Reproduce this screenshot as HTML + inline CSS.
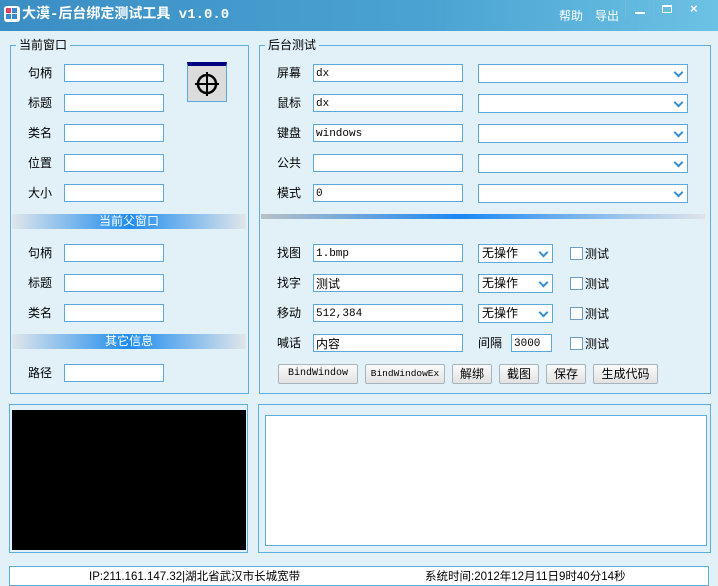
<!DOCTYPE html>
<html><head><meta charset="utf-8"><style>
*{margin:0;padding:0;box-sizing:border-box}
body{width:718px;height:582px;background:#e2f1f8;position:relative;overflow:hidden;font-family:"Liberation Sans","Noto Sans CJK SC",sans-serif;font-size:12px;color:#000}
.a{position:absolute}
.title{left:0;top:0;width:718px;height:31px;background:linear-gradient(90deg,#3b8ec4,#4aa3d2 60%,#6cc2e4);}
.box{position:absolute;border:1px solid #5aaee0}
.leg{position:absolute;background:#e2f1f8;padding:0 3px;font-size:12px;line-height:14px}
.in{position:absolute;height:18px;background:#fff;border:1px solid #5aa8dc;font-family:"Liberation Mono","Noto Sans CJK SC",monospace;font-size:11px;display:flex;align-items:center;padding-left:2px;padding-top:1px}
.lb{position:absolute;font-size:12px;line-height:14px}
.sel{position:absolute;height:19px;background:#fff;border:1px solid #5aa8dc;font-size:12px;line-height:17px;padding-left:3px}
.sel:after{content:"";position:absolute;right:5px;top:4px;width:5px;height:5px;border-right:2px solid #3a8fd0;border-bottom:2px solid #3a8fd0;transform:rotate(45deg)}
.bar{position:absolute;left:12px;width:234px;height:15px;background:linear-gradient(90deg,#e0e6ea,#1e8cf0 50%,#e0e6ea);color:#fff;text-align:center;font-size:12px;line-height:15px}
.cb{position:absolute;width:13px;height:13px;background:#fff;border:1px solid #6a9ec8}
.btn{position:absolute;top:364px;height:20px;border:1px solid #a8b4bc;border-radius:2px;background:linear-gradient(#fafafa,#e2e2e2);line-height:18px;text-align:center;font-family:"Liberation Mono","Noto Sans CJK SC",monospace;font-size:10px;white-space:nowrap}
.btn.c{font-family:"Liberation Sans","Noto Sans CJK SC",sans-serif;font-size:12px}
</style></head><body>
<div class="a title"></div>
<div class="a" style="left:4px;top:6px;width:16px;height:16px;background:#fff;border-radius:3px"><div class="a" style="left:2px;top:2px;width:5px;height:5px;background:#e0406a"></div><div class="a" style="left:8px;top:2px;width:5px;height:5px;background:#3a8ad0"></div><div class="a" style="left:2px;top:8px;width:5px;height:5px;background:#3a8ad0"></div><div class="a" style="left:8px;top:8px;width:5px;height:5px;background:#3a8ad0"></div></div>
<div class="a" style="left:22px;top:6px;color:#fff;font-weight:bold;font-size:14px;line-height:18px;font-family:'Liberation Mono','Noto Sans CJK SC',monospace">大漠-后台绑定测试工具 v1.0.0</div>
<div class="a" style="left:559px;top:7px;color:#fff;font-size:12px">帮助</div>
<div class="a" style="left:595px;top:7px;color:#fff;font-size:12px">导出</div>
<div class="a" style="left:625px;top:0;width:1px;height:18px;background:#7ab8d8"></div>
<div class="a" style="left:653px;top:0;width:1px;height:18px;background:#7ab8d8"></div>
<div class="a" style="left:681px;top:0;width:1px;height:18px;background:#7ab8d8"></div>
<div class="a" style="left:635px;top:12px;width:10px;height:2px;background:#fff"></div>
<div class="a" style="left:662px;top:5px;width:10px;height:8px;border:1px solid #fff;border-top-width:2px"></div>
<div class="a" style="left:690px;top:1px;color:#fff;font-weight:bold;font-size:13px">×</div>

<div class="box" style="left:10px;top:45px;width:239px;height:349px"></div>
<div class="leg" style="left:16px;top:38px">当前窗口</div>
<div class="box" style="left:259px;top:45px;width:452px;height:349px"></div>
<div class="leg" style="left:265px;top:38px">后台测试</div>

<div class="lb" style="left:28px;top:66px">句柄</div><div class="in" style="left:64px;top:64px;width:100px"></div>
<div class="lb" style="left:28px;top:96px">标题</div><div class="in" style="left:64px;top:94px;width:100px"></div>
<div class="lb" style="left:28px;top:126px">类名</div><div class="in" style="left:64px;top:124px;width:100px"></div>
<div class="lb" style="left:28px;top:156px">位置</div><div class="in" style="left:64px;top:154px;width:100px"></div>
<div class="lb" style="left:28px;top:186px">大小</div><div class="in" style="left:64px;top:184px;width:100px"></div>
<div class="bar" style="top:214px">当前父窗口</div>
<div class="lb" style="left:28px;top:246px">句柄</div><div class="in" style="left:64px;top:244px;width:100px"></div>
<div class="lb" style="left:28px;top:276px">标题</div><div class="in" style="left:64px;top:274px;width:100px"></div>
<div class="lb" style="left:28px;top:306px">类名</div><div class="in" style="left:64px;top:304px;width:100px"></div>
<div class="bar" style="top:334px">其它信息</div>
<div class="lb" style="left:28px;top:366px">路径</div><div class="in" style="left:64px;top:364px;width:100px"></div>

<div class="a" style="left:187px;top:62px;width:40px;height:40px;background:#dcdcdc;border:1px solid #5aa8dc;border-top:4px solid #000080">
<svg width="38" height="36" viewBox="0 0 38 36" style="position:absolute;left:0;top:0"><circle cx="19" cy="18" r="9" fill="none" stroke="#000" stroke-width="2.5"/><path d="M19 6v24M7 18h24" stroke="#000" stroke-width="2"/></svg></div>

<div class="lb" style="left:277px;top:66px">屏幕</div><div class="in" style="left:313px;top:64px;width:150px">dx</div>
<div class="lb" style="left:277px;top:96px">鼠标</div><div class="in" style="left:313px;top:94px;width:150px">dx</div>
<div class="lb" style="left:277px;top:126px">键盘</div><div class="in" style="left:313px;top:124px;width:150px">windows</div>
<div class="lb" style="left:277px;top:156px">公共</div><div class="in" style="left:313px;top:154px;width:150px"></div>
<div class="lb" style="left:277px;top:186px">模式</div><div class="in" style="left:313px;top:184px;width:150px">0</div>
<div class="sel" style="left:478px;top:64px;width:210px"></div>
<div class="sel" style="left:478px;top:94px;width:210px"></div>
<div class="sel" style="left:478px;top:124px;width:210px"></div>
<div class="sel" style="left:478px;top:154px;width:210px"></div>
<div class="sel" style="left:478px;top:184px;width:210px"></div>
<div class="a" style="left:261px;top:214px;width:444px;height:5px;background:linear-gradient(90deg,#b8c0c6,#1a88f4 45%,#dfe4e8)"></div>

<div class="lb" style="left:277px;top:246px">找图</div><div class="in" style="left:313px;top:244px;width:150px">1.bmp</div>
<div class="lb" style="left:277px;top:276px">找字</div><div class="in" style="left:313px;top:274px;width:150px;font-size:12px">测试</div>
<div class="lb" style="left:277px;top:306px">移动</div><div class="in" style="left:313px;top:304px;width:150px">512,384</div>
<div class="lb" style="left:277px;top:336px">喊话</div><div class="in" style="left:313px;top:334px;width:150px;font-size:12px">内容</div>
<div class="sel" style="left:478px;top:244px;width:75px">无操作</div>
<div class="sel" style="left:478px;top:274px;width:75px">无操作</div>
<div class="sel" style="left:478px;top:304px;width:75px">无操作</div>
<div class="lb" style="left:478px;top:336px">间隔</div><div class="in" style="left:511px;top:334px;width:41px">3000</div>
<div class="cb" style="left:570px;top:247px"></div><div class="lb" style="left:585px;top:247px">测试</div>
<div class="cb" style="left:570px;top:277px"></div><div class="lb" style="left:585px;top:277px">测试</div>
<div class="cb" style="left:570px;top:307px"></div><div class="lb" style="left:585px;top:307px">测试</div>
<div class="cb" style="left:570px;top:337px"></div><div class="lb" style="left:585px;top:337px">测试</div>

<div class="btn" style="left:278px;width:80px">BindWindow</div>
<div class="btn" style="left:365px;width:80px;font-size:9.5px">BindWindowEx</div>
<div class="btn c" style="left:452px;width:40px">解绑</div>
<div class="btn c" style="left:499px;width:40px">截图</div>
<div class="btn c" style="left:546px;width:40px">保存</div>
<div class="btn c" style="left:593px;width:65px">生成代码</div>

<div class="box" style="left:9px;top:404px;width:239px;height:149px"></div>
<div class="a" style="left:12px;top:410px;width:234px;height:140px;background:#000"></div>
<div class="box" style="left:258px;top:404px;width:453px;height:149px"></div>
<div class="a" style="left:265px;top:415px;width:442px;height:131px;background:#fff;border:1px solid #5aaee0"></div>

<div class="a" style="left:9px;top:566px;width:700px;height:20px;background:#fff;border:1px solid #5aaee0"></div>
<div class="a" style="left:89px;top:570px;font-size:11.5px;line-height:14px">IP:211.161.147.32|湖北省武汉市长城宽带</div>
<div class="a" style="left:425px;top:570px;font-size:11.5px;line-height:14px">系统时间:2012年12月11日9时40分14秒</div>
</body></html>
